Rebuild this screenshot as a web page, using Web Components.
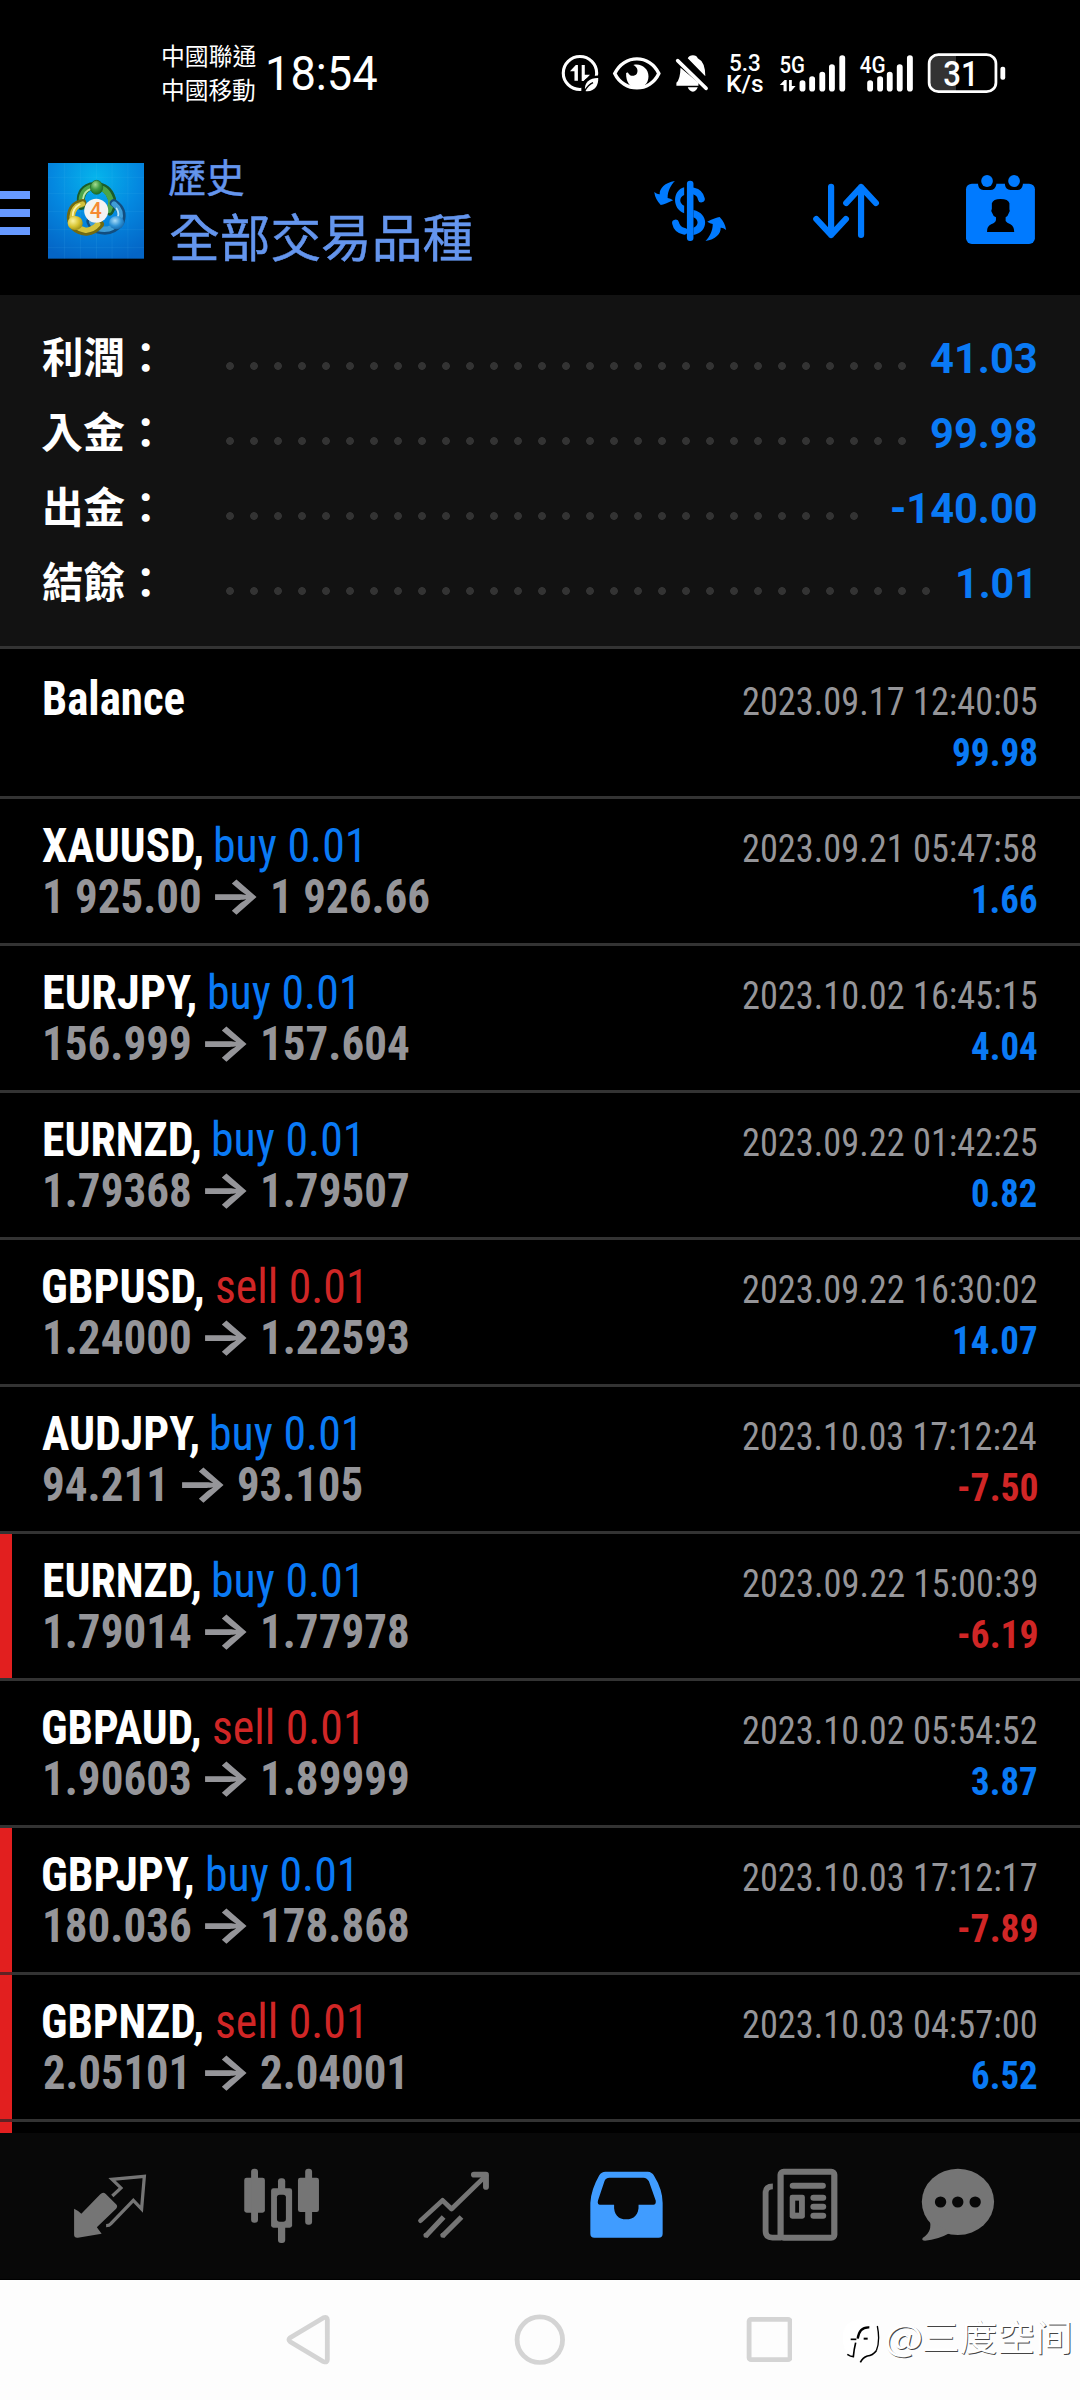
<!DOCTYPE html>
<html lang="zh-Hant">
<head>
<meta charset="utf-8">
<title>歷史</title>
<style>
html,body{margin:0;background:#000}
body{width:1080px;height:2400px;overflow:hidden;font-family:Roboto,"Noto Sans CJK TC",sans-serif;color:#fff}
</style>
</head>
<body>
<history-screen></history-screen>
<script>
const pen = document.createElement('canvas').getContext('2d');

/* Text whose visible ink spans exactly w pixels. */
customElements.define('ink-text', class extends HTMLElement {
  connectedCallback() {
    if (this.shadowRoot) return;
    const root = this.attachShadow({mode: 'open'});
    root.innerHTML = `<style>:host{display:block;flex:none;white-space:pre}span{display:inline-block;transform-origin:0 0}</style><span><slot></slot></span>`;
    const cs = getComputedStyle(this), w = +this.getAttribute('w');
    pen.font = `${cs.fontWeight} ${cs.fontSize} ${cs.fontFamily}`;
    const m = pen.measureText(this.textContent);
    const k = w / (m.actualBoundingBoxLeft + m.actualBoundingBoxRight);
    const span = root.querySelector('span');
    this.style.width = w + 'px';
    span.style.marginLeft = m.actualBoundingBoxLeft * k + 'px';
    span.style.transform = `scaleX(${k})`;
  }
});

/* Icon set, drawn on a shared grid of 2.9037 x 3 units per pixel. */
const ICONS = {
  status: ['60 95 440 130', `
    <ellipse cx="118" cy="158" rx="48.500" ry="49.500" fill="none" stroke="#fff" stroke-width="9"/>
    <path fill="#fff" d="M89 153L106 134H112V181H102V153ZM123 134H132V163H147L130 182H123Z"/>
    <path d="M122 220V205Q120 168 176 165V220Z" fill="#000"/>
    <path d="M133 212C128 184 150 172 171 173C172 196 160 216 133 212Z" fill="#fff"/>
    <path d="M131 213Q142 193 156 187" stroke="#000" stroke-width="4" fill="none"/>
    <path d="M219 159.500C246 101 321 101 347 159.500C321 217 246 217 219 159.500Z" fill="none" stroke="#fff" stroke-width="10"/>
    <path fill="#fff" d="M273 134C296 128 317 145 317 168C317 190 302 203 284 203C264 203 251 186 252 158C256 155 258 156 260 161C266 170 278 167 283 160C288 150 284 140 273 134Z"/>
    <path fill="#fff" d="M431 114Q435 105 446 105Q457 105 460 114Q482 125 482 168ZM410 142L462 187V196H398V187Q409 178 410 142ZM431 201H460Q456 213 446 214Q435 213 431 201Z"/>
    <path d="M402 121L484 204" stroke="#fff" stroke-width="11" stroke-linecap="round"/>`],
  sig5: ['690 95 210 130', `
    <text x="697" y="159" font-size="73" font-weight="500" fill="#fff" textLength="74" lengthAdjust="spacingAndGlyphs">5G</text>
    <path fill="#fff" d="M698 194L712 179H718V213H709V194ZM725 179H733V197H744L731 213H725Z"/>
    <path stroke="#fff" stroke-width="17" stroke-linecap="round" d="M764 188V205M792 176V205M821.500 163V205M849.500 140V205M879.500 113V205"/>`],
  sig4: ['920 95 175 130', `
    <text x="931" y="159" font-size="73" font-weight="500" fill="#fff" textLength="75" lengthAdjust="spacingAndGlyphs">4G</text>
    <path stroke="#fff" stroke-width="17" stroke-linecap="round" d="M961 188V205M990 176V205M1018 163V205M1047 140V205M1076.500 113V205"/>`],
  battery: ['1120 95 240 130', `
    <path d="M1160 103H1210V214H1160Q1132 214 1132 186V131Q1132 103 1160 103Z" fill="#333"/>
    <rect x="1132" y="103" width="194" height="111" rx="27" fill="none" stroke="#fff" stroke-width="8"/>
    <rect x="1339" y="139" width="14" height="39" rx="6" fill="#fff"/>
    <text x="1173" y="196" font-size="103" font-weight="500" fill="#fff" textLength="103" lengthAdjust="spacingAndGlyphs">31</text>`],
  dollar: ['310.1 450 250 240', `<g fill="#007aff">
    <rect x="426" y="482" width="19" height="181" rx="9"/>
    <path d="M418 502C383 511 383 568 418 580V557C403 550 403 532 418 525Z"/>
    <path d="M445 570C491 580 490 637 445 645V623C461 617 461 599 445 592Z"/>
    <path fill="none" stroke="#007aff" stroke-width="20" stroke-linecap="round" d="M445 513Q464 517 468 537M393 609Q397 629 418 634" />
    <path d="M391 483C362 488 346 505 347 523Q341 524 331 516Q334 538 350 555Q362 553 386 541Q378 535 370 534C370 512 380 495 391 483Z"/>
    <path transform="rotate(180 435.500 573)" d="M391 483C362 488 346 505 347 523Q341 524 331 516Q334 538 350 555Q362 553 386 541Q378 535 370 534C370 512 380 495 391 483Z"/></g>`],
  sort: ['763.4 450 250 240', `<path fill="none" stroke="#007aff" stroke-width="18" stroke-linecap="round" stroke-linejoin="round" d="M845 500V645M802 597L845 645L888 597M932 645V501M889 549L932 501L975 549"/>`],
  calendar: ['1216.6 450 250 240', `
    <rect x="1237" y="491" width="200" height="181" rx="17" fill="#007aff"/>
    <path d="M1272 488H1325V494Q1321 510 1308 510H1287Q1274 508 1272 494ZM1350 488H1402V494Q1399 510 1386 510H1366Q1352 508 1350 494Z" fill="#000"/>
    <ellipse cx="1298" cy="483" rx="17" ry="18" fill="#007aff"/><ellipse cx="1376.500" cy="483" rx="17" ry="18" fill="#007aff"/>
    <path d="M1312 550Q1316 537 1337 537Q1360 537 1363 550V568Q1366 572 1361 580Q1359 588 1352 592V603Q1355 609 1366 613Q1377 620 1377 636H1298Q1297 619 1310 613Q1322 609 1324 600V592Q1315 588 1313 579Q1308 573 1312 566Z" fill="#000"/>`],
  quotes: ['194.4 220 250 250', `
    <path fill="#757575" d="M215 357Q226 362 236 372L291 314Q299 305 307 313L337 344Q343 350 337 357L281 413L295 432L226 444Q215 445 215 435Z"/>
    <path fill="none" stroke="#757575" stroke-width="9.500" d="M326 319L351 295L325 269L419 260L411 358L387 332L322 402Q317 408 308 408"/>`],
  candles: ['693.8 220 250 250', `<g fill="#757575">
    <rect x="709" y="264" width="60" height="105" rx="7"/><rect x="729" y="237" width="20" height="162" rx="9"/>
    <rect x="865" y="264" width="61" height="103" rx="7"/><rect x="886" y="237" width="20" height="168" rx="9"/>
    <rect x="787" y="296" width="61" height="118" rx="7"/><rect x="807" y="266" width="21" height="40" rx="9"/><rect x="807" y="404" width="21" height="56" rx="9"/></g>
    <rect x="804" y="315" width="26" height="81" rx="8" fill="#080808"/>`],
  trend: ['1193.3 220 250 250', `<g fill="none" stroke="#757575" stroke-linecap="round" stroke-linejoin="round">
    <path stroke-width="14" d="M1221 393L1285 332L1311 358L1411 258"/><path stroke-width="17" d="M1376 255H1411V292"/>
    <path stroke-width="15" stroke-linecap="butt" d="M1235 440L1288 382M1284 440L1340 382"/><path stroke-width="15" d="M1237 437h.1M1286 437h.1"/></g>`],
  inbox: ['124.7 220 250 250', `<path fill="#409cff" fill-rule="evenodd" d="M190 246H313Q325 247 331 258Q356 300 356 340V432Q356 444 344 444H158Q146 444 146 432V340Q148 300 172 257Q178 246 190 246ZM202 264H300Q311 265 316 275L336 333Q337 345 329 345H286C288 375 272 389 250 389C228 389 213 375 215 345H174Q166 345 168 333L187 275Q190 264 202 264Z"/>`],
  news: ['624.2 220 250 250', `
    <g fill="none" stroke="#757575"><rect x="698.500" y="246" width="156" height="198" rx="9" stroke-width="18"/><path stroke-width="17" d="M676 290Q656 290 655 308V425Q655 444 675 444H700"/></g>
    <g fill="#757575"><rect x="725" y="279" width="105" height="18" rx="9"/><rect x="725" y="315" width="44" height="72" rx="7"/>
    <rect x="785" y="315" width="46" height="18" rx="9"/><rect x="785" y="342" width="46" height="18" rx="9"/><rect x="785" y="369" width="46" height="18" rx="9"/></g>
    <rect x="741" y="333" width="11" height="36" fill="#080808"/>`],
  chat: ['1088.8 220 250 250', `<g fill="#757575"><ellipse cx="1213.500" cy="336.500" rx="105" ry="99.500"/><path d="M1131 390Q1141 425 1111 445Q1107 453 1118 453Q1155 450 1190 430Z"/></g>
    <g fill="#080808"><circle cx="1163" cy="337" r="16.500"/><circle cx="1213" cy="337" r="16.500"/><circle cx="1263.500" cy="337" r="16.500"/></g>`],
  back: ['831 673 129 154', `<path fill="none" stroke="#d4d4d4" stroke-width="14" stroke-linejoin="round" d="M843 744L940 684Q951 680 951 690V810Q951 820 940 816L843 756Q837 750 843 744Z"/>`],
  home: ['-75 673 150 154', `<ellipse cx="0" cy="750" rx="66" ry="68.500" fill="none" stroke="#d4d4d4" stroke-width="14"/>`],
  recent: ['597 673 136 154', `<rect x="606" y="689" width="119" height="121" rx="6" fill="none" stroke="#d4d4d4" stroke-width="14"/>`],
  logo: ['139 429 279 287', `
    <defs>
      <radialGradient id="bg" cx=".5" cy=".15" r=".9"><stop offset="0" stop-color="#05b4ec"/><stop offset=".5" stop-color="#0488e0"/><stop offset="1" stop-color="#0465c6"/></radialGradient>
      <radialGradient id="g" cx=".4" cy=".3" r=".8"><stop offset="0" stop-color="#a5dc92"/><stop offset=".45" stop-color="#3f9a43"/><stop offset="1" stop-color="#12611c"/></radialGradient>
      <radialGradient id="y" cx=".35" cy=".35" r=".8"><stop offset="0" stop-color="#fbf4a0"/><stop offset=".5" stop-color="#d9c634"/><stop offset="1" stop-color="#8b8110"/></radialGradient>
      <radialGradient id="b" cx=".4" cy=".35" r=".8"><stop offset="0" stop-color="#a9dcf8"/><stop offset=".5" stop-color="#2f93d6"/><stop offset="1" stop-color="#0c5596"/></radialGradient>
    </defs>
    <rect x="139" y="429" width="279" height="287" fill="url(#bg)"/>
    <path d="M187 429V716M233 429V716M280 429V716M325 429V716M371 429V716M139 473H418M139 520H418M139 574H418M139 629H418M139 683H418" stroke="#5cc8f6" stroke-opacity=".16" stroke-width="2" fill="none"/>
    <g fill="none" stroke-linecap="round">
      <path d="M236 558Q227 512 263 499Q312 492 325 537Q328 558 318 575" stroke="#1b5c2a" stroke-width="23"/>
      <path d="M237 555Q230 515 264 501Q309 496 321 538Q324 555 316 571" stroke="#4ba54a" stroke-width="16"/>
      <path d="M240 540Q242 513 266 506" stroke="#bde8ac" stroke-width="5"/>
      <path d="M330 549Q361 571 350 605Q325 642 283 629Q268 621 262 605" stroke="#124e80" stroke-width="23"/>
      <path d="M331 552Q356 573 346 602Q323 636 284 625Q271 619 266 606" stroke="#3f9dd6" stroke-width="16"/>
      <path d="M338 565Q349 582 338 598" stroke="#bce6fa" stroke-width="5"/>
      <path d="M239 549Q207 555 205 591Q207 630 250 636Q275 632 290 613" stroke="#716a12" stroke-width="23"/>
      <path d="M239 552Q211 559 209 591Q212 624 249 631Q271 628 283 613" stroke="#d3c23c" stroke-width="16"/>
      <path d="M231 553Q211 565 211 586" stroke="#faf4ae" stroke-width="5"/>
    </g>
    <ellipse cx="280" cy="502" rx="18" ry="21" fill="url(#g)" stroke="#1e6327" stroke-width="2"/>
    <ellipse cx="218" cy="609" rx="22" ry="21" fill="url(#y)"/>
    <ellipse cx="338" cy="608" rx="22" ry="20" fill="url(#b)"/>
    <ellipse cx="279" cy="572" rx="35" ry="36" fill="#f3f3f1"/>
    <text x="260" y="595" font-size="66" font-weight="500" fill="#f58a32" textLength="35" lengthAdjust="spacingAndGlyphs">4</text>`],
  mark: ['30 50 120 145', `
    <path fill="#fff" d="M38 115Q38 62 92 62Q147 62 146 120Q145 160 112 170L91 190Q88 175 70 174Q40 165 38 115Z"/>
    <g fill="none" stroke="#000" stroke-width="5"><path d="M118 84Q88 82 83 118" stroke-width="7"/><path d="M62 120H79"/><path d="M52 165Q62 172 70 172Q72 150 77 130"/><path d="M101 118H113" stroke-width="6"/><path d="M142 80Q151 125 139 154" stroke-width="4"/><path d="M139 154Q128 168 112 170Q98 175 91 189"/></g>`]
};

customElements.define('ui-icon', class extends HTMLElement {
  connectedCallback() {
    const name = this.getAttribute('name');
    const [box, art] = ICONS[name];
    const [, , w, h] = box.split(' ').map(Number);
    const unit = name === 'mark' ? 3 : 2.9037;
    this.attachShadow({mode: 'open'}).innerHTML = `<style>:host{display:block;flex:none}svg{display:block;font-family:Roboto,sans-serif}</style>
      <svg viewBox="${box}" preserveAspectRatio="none" width="${w / unit}" height="${h / 3}">${art}</svg>`;
  }
});

customElements.define('status-bar', class extends HTMLElement {
  connectedCallback() {
    this.attachShadow({mode: 'open'}).innerHTML = `<style>
      :host{display:flex;align-items:center;height:143px;padding-left:163.200px;box-sizing:border-box}
      .carrier{font:400 23.500px/34px "Noto Sans CJK TC",sans-serif}
      .time{font:400 49px/60px Roboto;padding-top:4.500px;margin-left:12.500px}
      .icons{display:flex;align-items:center;padding-top:3.500px;margin-left:183px}
      .speed{font:500 24.500px/21.500px Roboto;display:flex;flex-direction:column;align-items:center;margin:0 13.500px 0 15.500px}
    </style>
    <div class="carrier"><ink-text w="92.8">中國聯通</ink-text><ink-text w="92.3">中國移動</ink-text></div>
    <ink-text class="time" w="108.5">18:54</ink-text>
    <div class="icons"><ui-icon name="status"></ui-icon>
      <div class="speed"><ink-text w="30">5.3</ink-text><ink-text w="36">K/s</ink-text></div>
      <ui-icon name="sig5"></ui-icon><ui-icon name="sig4" style="margin-left:6.900px"></ui-icon><ui-icon name="battery" style="margin-left:8.600px"></ui-icon></div>`;
  }
});

customElements.define('app-bar', class extends HTMLElement {
  connectedCallback() {
    this.attachShadow({mode: 'open'}).innerHTML = `<style>
      :host{display:flex;height:152px;box-sizing:border-box;color:#6495ed}
      .menu{display:flex;flex-direction:column;gap:10px;width:30px;margin:48px 18px 0 0}
      .menu i{height:8px;background:#69f}
      ui-icon[name=logo]{margin:20px 26px 0 0}
      .titles{font-family:"Noto Sans CJK TC",sans-serif;font-weight:400;padding-top:8px;flex:1;margin-left:-.7px;-webkit-text-stroke:.5px #6495ed}
      .sub{font-size:38.500px;line-height:48px}
      .main{font-size:51.500px;line-height:71px;margin-left:1px}
      .tools{display:flex;gap:70px;padding:27px 34.900px 0 0}
    </style>
    <div class="menu"><i></i><i></i><i></i></div>
    <ui-icon name="logo"></ui-icon>
    <div class="titles"><ink-text class="sub" w="75">歷史</ink-text><ink-text class="main" w="301.7">全部交易品種</ink-text></div>
    <div class="tools"><ui-icon name="dollar"></ui-icon><ui-icon name="sort"></ui-icon><ui-icon name="calendar"></ui-icon></div>`;
  }
});

customElements.define('summary-row', class extends HTMLElement {
  connectedCallback() {
    const a = n => this.getAttribute(n);
    this.attachShadow({mode: 'open'}).innerHTML = `<style>
      :host{display:flex;align-items:flex-start;height:75px}
      .cap{width:175px;display:flex;justify-content:flex-end;box-sizing:border-box;padding-right:68px;font:700 41.500px/70px "Noto Sans CJK TC",sans-serif}
      .dots{height:8px;margin-top:42px;background:radial-gradient(circle,#333 3.500px,transparent 4.200px) 0 0/24px 8px}
      .val{font:700 42px/77px Roboto;color:#0a7af5;margin-left:auto}
    </style>
    <div class="cap"><ink-text w="${a('cw')}">${a('label')}</ink-text></div>
    <div class="dots" style="width:${a('dots') * 24}px"></div>
    <ink-text class="val" w="${a('vw')}" style="margin-right:${a('end') || 0}px">${a('value')}</ink-text>`;
  }
});

customElements.define('account-summary', class extends HTMLElement {
  connectedCallback() {
    this.attachShadow({mode: 'open'}).innerHTML = `<style>
      :host{display:block;height:354px;box-sizing:border-box;padding:25px 43.500px 0 43px;background:#121212;border-bottom:3px solid #333}
    </style><slot></slot>`;
  }
});

const BLUE = '#0a7af5', RED = '#d02626';
customElements.define('deal-row', class extends HTMLElement {
  set deal(d) {
    const parts = (list, cls) => {
      let x = 0;
      return list.map(([t, from, to, extra = '']) => {
        const s = `<ink-text class="${cls} ${extra}" w="${(to - from).toFixed(1)}" style="margin-left:${(from - x).toFixed(1)}px">${t}</ink-text>`;
        x = to; return s;
      }).join('');
    };
    this.attachShadow({mode: 'open'}).innerHTML = `<style>
      :host{display:block;background:linear-gradient(90deg,${d.mark ? '#e21f1f' : '#000'} 12px,#000 12px)}
      .body{display:flex;flex-direction:column;box-sizing:border-box;height:${d.first ? 147 : 144}px;padding:${d.first ? 24 : 21}px 43.300px 0 0}
      .line{display:flex;height:51px;align-items:baseline}
      .line::before{content:"\\200b";width:0;font:400 48.800px/51px "Roboto Condensed",Roboto}
      .name,.price{font:700 48.800px/51px "Roboto Condensed",Roboto}
      .price{color:#959599}
      .price.arrow{font:700 50px/36px Inter}
      .act{font:400 48.800px/51px "Roboto Condensed",Roboto;color:${d.side === 'sell' ? RED : BLUE}}
      .date,.profit{font:400 39.200px/40px "Roboto Condensed",Roboto;color:#959599;margin-left:auto}
      .profit{font-weight:700;color:${d.profit[0] === '-' ? RED : BLUE}}
      hr{margin:0;border:0;height:3px;background:linear-gradient(90deg,${d.joined ? '#602224' : '#333'} 12px,#333 12px)}
    </style>
    <div class="body"><div class="line">${parts([d.name], 'name')}${d.side ? `<ink-text class="act" w="144" style="margin-left:14px">${d.side} 0.01</ink-text>` : ''}<ink-text class="date" w="293.400">${d.date}</ink-text></div>
    <div class="line">${d.prices ? parts(d.prices, 'price') : ''}<ink-text class="profit" w="${d.pw}">${d.profit}</ink-text></div></div><hr>`;
  }
});

const seven = (a, b) => [[a, 45, 190.4], ['→', 205, 247, 'arrow'], [b, 263, 408.4]];
const DEALS = [
  {name: ['Balance', 44, 184], date: '2023.09.17 12:40:05', profit: '99.98', pw: 83.5, first: true},
  {name: ['XAUUSD,', 42, 202.3], side: 'buy', prices: [['1 925.00', 45, 200.4], ['→', 215, 257, 'arrow'], ['1 926.66', 273, 428.8]], date: '2023.09.21 05:47:58', profit: '1.66', pw: 63},
  {name: ['EURJPY,', 44, 195.6], side: 'buy', prices: seven('156.999', '157.604'), date: '2023.10.02 16:45:15', profit: '4.04', pw: 65},
  {name: ['EURNZD,', 44, 200.3], side: 'buy', prices: seven('1.79368', '1.79507'), date: '2023.09.22 01:42:25', profit: '0.82', pw: 64.5},
  {name: ['GBPUSD,', 43.3, 203.3], side: 'sell', prices: seven('1.24000', '1.22593'), date: '2023.09.22 16:30:02', profit: '14.07', pw: 82},
  {name: ['AUDJPY,', 42, 198.3], side: 'buy', prices: [['94.211', 43.7, 162.7], ['→', 182.3, 224.3, 'arrow'], ['93.105', 239.3, 362]], date: '2023.10.03 17:12:24', profit: '-7.50', pw: 78},
  {name: ['EURNZD,', 44, 200.3], side: 'buy', prices: seven('1.79014', '1.77978'), date: '2023.09.22 15:00:39', profit: '-6.19', pw: 78, mark: true},
  {name: ['GBPAUD,', 43.3, 200.3], side: 'sell', prices: seven('1.90603', '1.89999'), date: '2023.10.02 05:54:52', profit: '3.87', pw: 65},
  {name: ['GBPJPY,', 43.3, 193.4], side: 'buy', prices: seven('180.036', '178.868'), date: '2023.10.03 17:12:17', profit: '-7.89', pw: 78, mark: true, joined: true},
  {name: ['GBPNZD,', 43.3, 202.7], side: 'sell', prices: [['2.05101', 44, 185], ['→', 205, 247, 'arrow'], ['2.04001', 261.3, 403.3]], date: '2023.10.03 04:57:00', profit: '6.52', pw: 65, mark: true, joined: true}
];
customElements.define('deal-list', class extends HTMLElement {
  connectedCallback() {
    const root = this.attachShadow({mode: 'open'});
    root.innerHTML = `<style>:host{display:block;height:1484px;overflow:hidden}.next{width:12px;height:11px;background:#e21f1f}</style><div class="rows"></div><div class="next"></div>`;
    for (const d of DEALS) {
      const row = document.createElement('deal-row');
      root.querySelector('.rows').append(row);
      row.deal = d;
    }
  }
});

customElements.define('tab-bar', class extends HTMLElement {
  connectedCallback() {
    this.attachShadow({mode: 'open'}).innerHTML = `<style>
      :host{display:flex;height:147px;box-sizing:border-box;padding:30.300px 48px 0 24px;background:#080808;border-bottom:1px solid #000}
      div{width:172px;display:flex;justify-content:center;align-items:flex-start;flex:none}
      div:last-child{width:148px}
    </style>` + ['quotes', 'candles', 'trend', 'inbox', 'news', 'chat'].map(n => `<div><ui-icon name="${n}"></ui-icon></div>`).join('');
  }
});

customElements.define('system-nav', class extends HTMLElement {
  connectedCallback() {
    this.attachShadow({mode: 'open'}).innerHTML = `<style>
      :host{display:flex;align-items:center;height:120px;background:#fdfdfd;padding-left:286.200px;box-sizing:border-box}
      .mark{display:flex;align-items:center;margin-left:47.600px;font:400 36px/40px "Noto Sans CJK SC",sans-serif;color:#fff;text-shadow:.8px .8px 0 #444}
      .at{margin-left:6px}.who{margin-left:3.500px}
      .at,.who{padding-bottom:10px}
    </style>
    <ui-icon name="back"></ui-icon><ui-icon name="home" style="margin-left:183.500px"></ui-icon><ui-icon name="recent" style="margin-left:179.800px"></ui-icon>
    <div class="mark"><ui-icon name="mark"></ui-icon><ink-text class="at" w="34.500">@</ink-text><ink-text class="who" w="145.500">三度空间</ink-text></div>`;
  }
});

customElements.define('history-screen', class extends HTMLElement {
  connectedCallback() {
    this.attachShadow({mode: 'open'}).innerHTML = `<style>:host{display:flex;flex-direction:column;width:1080px;height:2400px}</style>
    <status-bar></status-bar>
    <app-bar></app-bar>
    <account-summary>
      <summary-row label="利潤：" cw="108" dots="29" value="41.03" vw="105.7"></summary-row>
      <summary-row label="入金：" cw="108" dots="29" value="99.98" vw="105.5"></summary-row>
      <summary-row label="出金：" cw="105" dots="27" value="-140.00" vw="144.5"></summary-row>
      <summary-row label="結餘：" cw="108" dots="30" value="1.01" vw="73" end="6"></summary-row>
    </account-summary>
    <deal-list></deal-list>
    <tab-bar></tab-bar>
    <system-nav></system-nav>`;
  }
});
</script>
</body>
</html>
